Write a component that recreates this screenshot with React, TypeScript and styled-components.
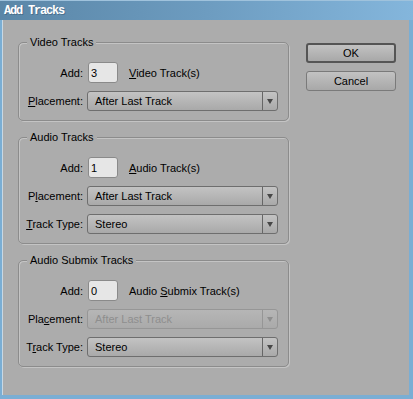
import React from "react";
import styled, { createGlobalStyle, css } from "styled-components";

const GlobalStyle = createGlobalStyle`
  html, body { margin: 0; padding: 0; background: #acacac; }
  * { box-sizing: border-box; }
`;

const Window = styled.div`
  width: 413px;
  height: 399px;
  display: flex;
  flex-direction: column;
  background: #7aaed4;
  font-family: "Liberation Sans", Arial, sans-serif;
  font-size: 11px;
  color: #000;
  overflow: hidden;
`;

const TitleBar = styled.div`
  height: 20px;
  flex: none;
  display: flex;
  align-items: center;
  padding-left: 4px;
  background: linear-gradient(to right, #5a86a7 0%, #6d9cc0 50%, #84b6dc 100%);
  border-top: 1px solid #9fc2dc;
  color: #fff;
  font-family: "Liberation Mono", "Courier New", monospace;
  font-weight: bold;
  font-size: 12px;
  letter-spacing: -1.2px;
  text-shadow: 1px 1px 0 rgba(40, 60, 80, 0.35);
`;

const Body = styled.div`
  flex: 1;
  margin: 0 4px 4px 2px;
  background: #acacac;
  border-left: 1px solid #c8d8e4;
  display: flex;
  align-items: flex-start;
  padding: 22px 13px 0 15px;
  gap: 17px;
`;

const GroupColumn = styled.div`
  width: 271px;
  display: flex;
  flex-direction: column;
  gap: 16px;
`;

const Group = styled.div`
  position: relative;
  border: 1px solid #8c8c8c;
  border-radius: 5px;
  box-shadow: 1px 1px 0 #c4c4c4, inset 1px 1px 0 #c4c4c4;
  padding: 19px 10px 9px 0;
  display: grid;
  grid-template-columns: 64px 1fr;
  column-gap: 4px;
  row-gap: 8px;
  align-items: center;
`;

const Legend = styled.span`
  position: absolute;
  left: 8px;
  top: -8px;
  padding: 0 3px;
  background: #acacac;
  line-height: 14px;
`;

const Label = styled.span`
  text-align: right;
  white-space: nowrap;
  color: #000;
`;

const AddControls = styled.div`
  display: flex;
  align-items: center;
  gap: 11px;
`;

const NumberBox = styled.div`
  width: 30px;
  height: 21px;
  margin-left: 1px;
  background: #e6e6e6;
  border: 1px solid #8a8a8a;
  border-radius: 3px;
  padding-left: 2px;
  display: flex;
  align-items: center;
`;

const Select = styled.div<{ $disabled?: boolean }>`
  height: 20px;
  width: 191px;
  display: flex;
  border: 1px solid #6e6e6e;
  border-radius: 3px;
  background: linear-gradient(#c3c3c3, #a9a9a9);
  ${(p) =>
    p.$disabled &&
    css`
      border-color: #969696;
      background: linear-gradient(#b6b6b6, #aaaaaa);
      color: #8e8e8e;
    `}
`;

const SelectText = styled.div`
  flex: 1;
  display: flex;
  align-items: center;
  padding-left: 7px;
`;

const SelectArrow = styled.div<{ $disabled?: boolean }>`
  width: 15px;
  border-left: 1px solid ${(p) => (p.$disabled ? "#969696" : "#666")};
  display: flex;
  align-items: center;
  justify-content: center;
  &::after {
    content: "";
    border-left: 3px solid transparent;
    border-right: 3px solid transparent;
    border-top: 5px solid ${(p) => (p.$disabled ? "#8e8e8e" : "#474747")};
    margin-top: 1px;
  }
`;

const ButtonColumn = styled.div`
  width: 90px;
  margin-top: 1px;
  display: flex;
  flex-direction: column;
  gap: 8px;
`;

const Button = styled.div<{ $default?: boolean }>`
  height: 20px;
  display: flex;
  align-items: center;
  justify-content: center;
  border-radius: 3px;
  border: 1px solid #7a7a7a;
  background: linear-gradient(#c2c2c2, #a8a8a8);
  ${(p) =>
    p.$default &&
    css`
      border: 2px solid #555;
    `}
`;

const U = styled.span`
  text-decoration: underline;
`;

function Dropdown({ value, disabled }: { value: string; disabled?: boolean }) {
  return (
    <Select $disabled={disabled}>
      <SelectText>{value}</SelectText>
      <SelectArrow $disabled={disabled} />
    </Select>
  );
}

export default function App() {
  return (
    <>
      <GlobalStyle />
      <Window>
        <TitleBar>Add Tracks</TitleBar>
        <Body>
          <GroupColumn>
            <Group>
              <Legend>Video Tracks</Legend>
              <Label>Add:</Label>
              <AddControls>
                <NumberBox>3</NumberBox>
                <span>
                  <U>V</U>ideo Track(s)
                </span>
              </AddControls>
              <Label>
                <U>P</U>lacement:
              </Label>
              <Dropdown value="After Last Track" />
            </Group>
            <Group>
              <Legend>Audio Tracks</Legend>
              <Label>Add:</Label>
              <AddControls>
                <NumberBox>1</NumberBox>
                <span>
                  <U>A</U>udio Track(s)
                </span>
              </AddControls>
              <Label>
                P<U>l</U>acement:
              </Label>
              <Dropdown value="After Last Track" />
              <Label>
                <U>T</U>rack Type:
              </Label>
              <Dropdown value="Stereo" />
            </Group>
            <Group>
              <Legend>Audio Submix Tracks</Legend>
              <Label>Add:</Label>
              <AddControls>
                <NumberBox>0</NumberBox>
                <span>
                  Audio <U>S</U>ubmix Track(s)
                </span>
              </AddControls>
              <Label>
                Pla<U>c</U>ement:
              </Label>
              <Dropdown value="After Last Track" disabled />
              <Label>
                T<U>r</U>ack Type:
              </Label>
              <Dropdown value="Stereo" />
            </Group>
          </GroupColumn>
          <ButtonColumn>
            <Button $default>OK</Button>
            <Button>Cancel</Button>
          </ButtonColumn>
        </Body>
      </Window>
    </>
  );
}
